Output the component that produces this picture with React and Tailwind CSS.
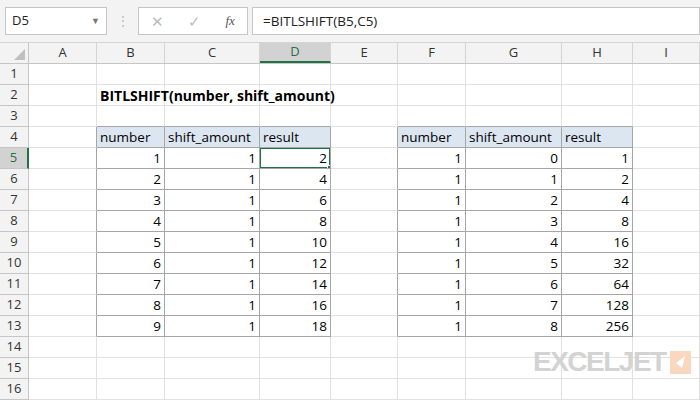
import React from "react";

const cols = [
  ["A", 68], ["B", 68], ["C", 95], ["D", 71], ["E", 67], ["F", 68], ["G", 96], ["H", 71], ["I", 67],
];
const L = [[1,1,2],[2,1,4],[3,1,6],[4,1,8],[5,1,10],[6,1,12],[7,1,14],[8,1,16],[9,1,18]];
const R = [0,1,2,3,4,5,6,7,8].map((s) => [1, s, 1 << s]);
const DK = "#a6a6a6";

function cellInfo(r, c) {
  let text = "", right = false, head = false, table = false, bold = false;
  if (r === 2 && c === 1) { text = "BITLSHIFT(number, shift_amount)"; bold = true; }
  const inL = c >= 1 && c <= 3, inR = c >= 5 && c <= 7;
  if (r >= 4 && r <= 13 && (inL || inR)) {
    table = true;
    const k = inL ? c - 1 : c - 5;
    if (r === 4) { head = true; text = ["number", "shift_amount", "result"][k]; }
    else { text = String((inL ? L : R)[r - 5][k]); right = true; }
  }
  const rightDark = table || (r >= 4 && r <= 13 && (c === 0 || c === 4));
  const bottomDark = table || (r === 3 && (inL || inR));
  return { text, right, head, table, bold, rightDark, bottomDark };
}

export default function App() {
  const rows = Array.from({ length: 16 }, (_, i) => i + 1);
  return (
    <div className="w-[700px] h-[400px] overflow-hidden bg-white relative" style={{ fontFamily: "'Open Sans','Noto Sans',sans-serif" }}>
      <div className="h-[43px] bg-[#f3f3f3] flex items-center pl-[5px] border-b border-[#d4d4d4]">
        <div className="w-[102px] h-[28px] bg-white border border-[#c6c6c6] flex items-center justify-between px-[6px] text-[13px] text-[#222]">
          <span>D5</span>
          <span className="text-[#777] text-[9px]">▼</span>
        </div>
        <div className="w-[31px] text-center text-[#bbb] text-[12px] leading-none">⋮</div>
        <div className="w-[110px] h-[28px] bg-white border border-[#c6c6c6] flex items-center justify-around text-[15px]">
          <span className="text-[#bcbcbc]">✕</span>
          <span className="text-[#bcbcbc]">✓</span>
          <span className="text-[#555] italic text-[13px]" style={{ fontFamily: "'Liberation Serif',serif" }}>fx</span>
        </div>
        <div className="flex-1 ml-[4px] h-[28px] bg-white border border-[#c6c6c6] flex items-center px-[10px] text-[13.5px] text-[#222]">
          =BITLSHIFT(B5,C5)
        </div>
      </div>
      <div className="flex h-[21px] bg-[#f3f3f3] border-b border-[#c6c6c6] text-[13px] text-[#333]">
        <div className="w-[29px] border-r border-[#c6c6c6] flex items-end justify-end p-[3px]">
          <div className="w-0 h-0 border-l-[11px] border-l-transparent border-b-[11px] border-b-[#c0c0c0]" />
        </div>
        {cols.map(([n, w]) => (
          <div key={n} style={{ width: w }} className={`shrink-0 flex items-center justify-center border-r border-[#d4d4d4] ${n === "D" ? "bg-[#d2d2d2] border-b-2 border-b-[#217346] text-[#217346]" : ""}`}>{n}</div>
        ))}
      </div>
      {rows.map((r) => (
        <div key={r} className="flex h-[21px] text-[13.5px]">
          <div className={`w-[29px] shrink-0 flex items-center justify-center text-[13px] border-r border-b border-[#c6c6c6] ${r === 5 ? "bg-[#d2d2d2] text-[#217346] border-r-2 border-r-[#217346]" : "bg-[#f3f3f3] text-[#333]"}`}>{r}</div>
          {cols.map(([n, w], c) => {
            const ci = cellInfo(r, c);
            const sel = r === 5 && c === 3;
            return (
              <div key={n} style={{ width: w, borderRightColor: ci.rightDark ? DK : "#e1e1e1", borderBottomColor: ci.bottomDark ? DK : "#e1e1e1" }}
                className={`shrink-0 relative border-r border-b px-[3px] flex items-center whitespace-nowrap text-black ${ci.right ? "justify-end" : ""} ${ci.head ? "bg-[#dce6f1]" : ""} ${ci.bold ? "font-bold overflow-visible z-10" : "overflow-hidden"}`}>
                {sel && <div className="absolute -left-[1px] -top-[1px] -right-[1px] -bottom-[1px] border-2 border-[#217346]"><div className="absolute -right-[4px] -bottom-[4px] w-[6px] h-[6px] bg-[#217346] border border-white" /></div>}
                <span className={ci.bold ? "absolute left-[3px] text-[14px]" : ""}>{ci.text}</span>
              </div>
            );
          })}
        </div>
      ))}
      <div className="absolute left-[533px] top-[348px] flex items-center gap-[4px]">
        <span className="text-[28px] font-black text-[#d3d3d3] tracking-[-1.5px] leading-none" style={{ fontFamily: "'Liberation Sans',sans-serif" }}>EXCELJET</span>
        <div className="w-[21px] h-[23px] bg-[#f9d8bf] flex items-center justify-center">
          <svg width="14" height="16" viewBox="0 0 14 16"><path d="M12 2 L3 9 L9 14 Z" fill="white" /></svg>
        </div>
      </div>
    </div>
  );
}
